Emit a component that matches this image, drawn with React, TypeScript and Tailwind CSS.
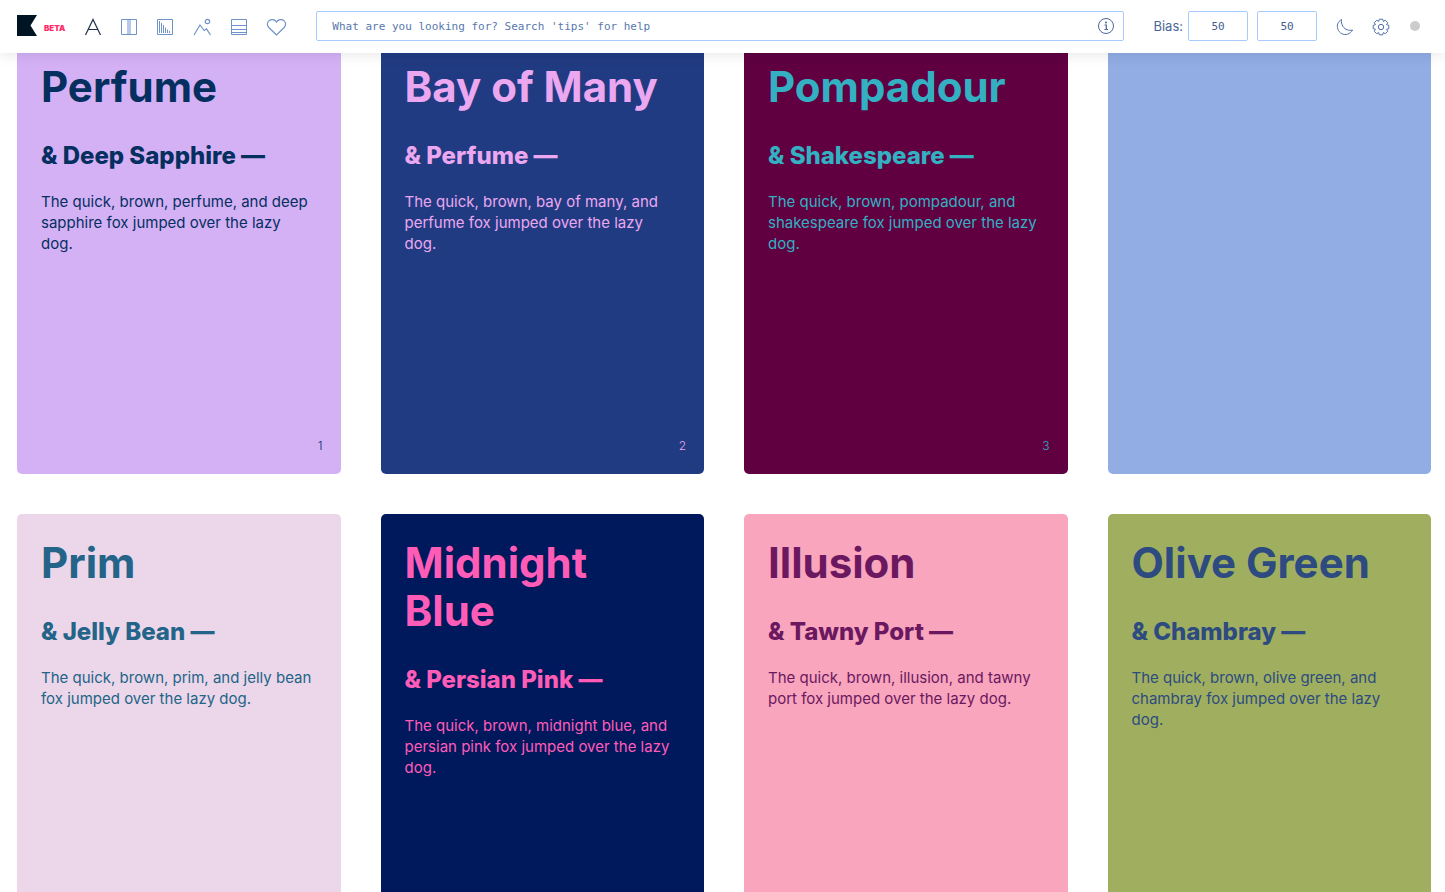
import { useState, type ReactNode } from "react";

type Pair = {
  name: string;
  partner: string;
  colors: string;
  index?: number;
};

const pairs: (Pair | null)[] = [
  { name: "Perfume", partner: "Deep Sapphire", colors: "bg-[#d4b1f5] text-[#052f5f]", index: 1 },
  { name: "Bay of Many", partner: "Perfume", colors: "bg-[#213b82] text-[#eba8f0]", index: 2 },
  { name: "Pompadour", partner: "Shakespeare", colors: "bg-[#600041] text-[#33b0c1]", index: 3 },
  null,
  { name: "Prim", partner: "Jelly Bean", colors: "bg-[#ebd7e9] text-[#236488]" },
  { name: "Midnight Blue", partner: "Persian Pink", colors: "bg-[#00185c] text-[#ff5cb8]" },
  { name: "Illusion", partner: "Tawny Port", colors: "bg-[#f8a5bd] text-[#6b1860]" },
  { name: "Olive Green", partner: "Chambray", colors: "bg-[#a0af5f] text-[#2d4b80]" },
];

type IconButtonProps = {
  label: string;
  width?: number;
  children: ReactNode;
};

const IconButton = ({ label, width = 20, children }: IconButtonProps) => (
  <button type="button" aria-label={label} className="shrink-0 cursor-pointer pt-0.5">
    <svg
      width={width}
      height="20"
      viewBox={`0 0 ${width} 20`}
      fill="none"
      stroke="currentColor"
      className="overflow-visible"
    >
      {children}
    </svg>
  </button>
);

const BiasInput = ({ label, initial }: { label: string; initial: string }) => {
  const [value, setValue] = useState(initial);

  return (
    <input
      type="text"
      aria-label={label}
      value={value}
      onChange={(e) => setValue(e.target.value)}
      className="h-[30px] w-15 rounded-xs border border-[#a9caff] bg-white text-center font-['DejaVu_Sans_Mono',monospace] text-[11px] text-[#3f5c8f] outline-none"
    />
  );
};

const Header = () => {
  const [query, setQuery] = useState("");

  return (
    <header className="relative z-10 flex h-[53px] shrink-0 items-center bg-white pr-[25px] pb-px pl-[17px] text-[#6f92c8] shadow-[0_0_15px_rgba(0,20,40,0.12)]">
      <a href="#" aria-label="Home" className="flex shrink-0 items-center pb-px">
        <svg width="20" height="21" viewBox="0 0 20 21" fill="#001523">
          <path d="M0 0H20L13.5 10.5L20 21H0Z" />
        </svg>
        <span className="ml-[7px] pt-1 font-[Inter,sans-serif] text-[8px] font-black text-[#ff2d6b]">
          BETA
        </span>
      </a>

      <nav aria-label="Views" className="ml-[18px] flex shrink-0 items-center gap-4">
        <span className="flex text-[#22304a]">
          <IconButton label="Type">
            <path d="M2.5 18L10 2.5L17.5 18M5 12.5H15" strokeWidth="1.2" />
          </IconButton>
        </span>
        <IconButton label="Columns">
          <path d="M8 2H12V18H8Z" fill="#b5c8e6" stroke="none" />
          <path d="M8.5 2.5H2.5V17.5H8.5M11.5 2.5H17.5V17.5H11.5M8 2.5H12M8 17.5H12" />
        </IconButton>
        <IconButton label="Gradients">
          <path d="M2.5 2.5H17.5V17.5H2.5ZM4.5 4V16M6.5 6V16M8.5 8V16M10.5 10.5V16M12.5 12.5V16M14.5 14V16" />
        </IconButton>
        <IconButton label="Images" width={22}>
          <path d="M3 18L9 8L13.2 13.5L15.5 11.8L19.5 18" strokeWidth="1.2" />
          <circle cx="16.5" cy="4.5" r="2.2" strokeWidth="1.2" />
        </IconButton>
        <IconButton label="Palettes">
          <path d="M2.5 2.5H17.5V17.5H2.5ZM2.5 8.5H17.5M2.5 12.5H17.5M2.5 15.5H17.5" />
        </IconButton>
        <IconButton label="Favorites" width={22}>
          <path
            d="M11.5 18L3.8 10.5C1.9 8.5 1.9 5.6 3.8 3.9C6.2 1.8 9.8 2.2 11.5 5C13.2 2.2 16.8 1.8 19.2 3.9C21.1 5.6 21.1 8.5 19.2 10.5Z"
            strokeWidth="1.2"
          />
        </IconButton>
      </nav>

      <div className="ml-[29px] flex h-[30px] min-w-0 flex-1 items-center rounded-xs border border-[#a9caff] pr-2 pl-[15px]">
        <input
          type="text"
          aria-label="Search"
          placeholder="What are you looking for? Search 'tips' for help"
          value={query}
          onChange={(e) => setQuery(e.target.value)}
          className="min-w-0 flex-1 pt-0.5 font-['DejaVu_Sans_Mono',monospace] text-[11px] text-[#3f5c8f] outline-none placeholder:text-[#5878ad]"
        />
        <span className="flex text-[#4a6799]">
          <IconButton label="Search tips">
            <circle cx="11" cy="9" r="7.5" />
            <path d="M11.3 7.5V12.5M9.5 8H11.5M9.5 12.5H13" strokeWidth="1.2" />
            <circle cx="11" cy="5.5" r="1" fill="currentColor" stroke="none" />
          </IconButton>
        </span>
      </div>

      <div className="ml-[29px] flex shrink-0 items-center text-[#4a6799]">
        <span className="mr-[5px] pt-0.5 font-[Inter,sans-serif] text-[13px]">Bias:</span>
        <div className="flex gap-[9px]">
          <BiasInput label="Background bias" initial="50" />
          <BiasInput label="Text bias" initial="50" />
        </div>
      </div>

      <div className="ml-[18px] flex shrink-0 items-center gap-4 text-[#4f6fa8]">
        <IconButton label="Dark mode">
          <path
            d="M6.5 2.5C3 4.5 1.5 8.3 2.8 12C4.2 16.2 8.6 18.4 12.6 17.2C14.9 16.5 16.6 14.9 17.5 13C14 14 10 12.7 8 9.5C6.6 7.3 6.1 4.9 6.5 2.5Z"
            strokeLinejoin="round"
          />
        </IconButton>
        <IconButton label="Settings">
          <path
            d="M17.8 11.7L15.6 12.3L16.7 14.3L14.3 16.7L12.3 15.6L11.7 17.8H8.3L7.7 15.6L5.7 16.7L3.3 14.3L4.4 12.3L2.2 11.7V8.3L4.4 7.7L3.3 5.7L5.7 3.3L7.7 4.4L8.3 2.2H11.7L12.3 4.4L14.3 3.3L16.7 5.7L15.6 7.7L17.8 8.3Z"
            strokeLinejoin="round"
          />
          <circle cx="10" cy="10" r="2.7" />
        </IconButton>
        <span className="ml-[3px] size-[10px] rounded-full bg-[#cccccc]" />
      </div>
    </header>
  );
};

const Card = ({ pair }: { pair: Pair }) => (
  <article
    className={`flex h-[436px] flex-col rounded-[5px] pt-[25px] pr-7 pb-5 pl-6 ${pair.colors}`}
  >
    <h2 className="text-[42px] leading-12 font-bold">{pair.name}</h2>
    <h3 className="mt-[30px] text-2xl leading-[30px] font-extrabold">{`& ${pair.partner} —`}</h3>
    <p className="mt-5 text-[15px] leading-[21px]">
      {`The quick, brown, ${pair.name.toLowerCase()}, and ${pair.partner.toLowerCase()} fox jumped over the lazy dog.`}
    </p>
    {pair.index && (
      <span className="mt-auto -mr-2.5 self-end text-xs font-light">{pair.index}</span>
    )}
  </article>
);

export default function App() {
  return (
    <div className="flex h-screen flex-col overflow-hidden bg-white">
      <Header />
      <main className="-mt-[15px] grid grid-cols-4 gap-10 pr-[14px] pl-[17px] font-[Inter,sans-serif]">
        {pairs.map((pair) =>
          pair ? (
            <Card key={pair.name} pair={pair} />
          ) : (
            <div key="blank" className="h-[436px] rounded-[5px] bg-[#91ade4]" />
          ),
        )}
      </main>
    </div>
  );
}
